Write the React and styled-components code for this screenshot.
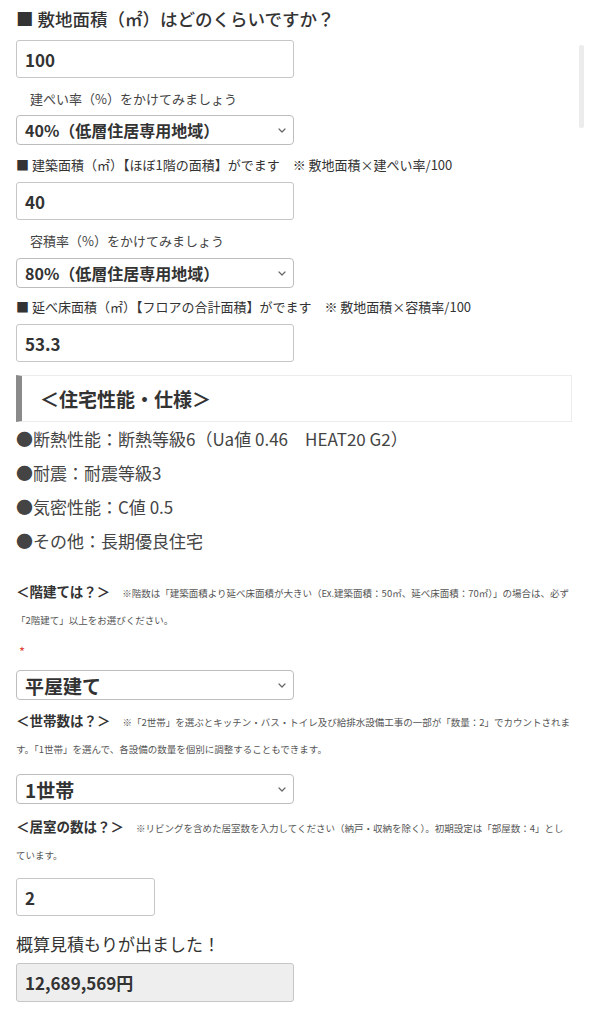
import React from 'react';
import styled, { createGlobalStyle } from 'styled-components';

const GlobalStyle = createGlobalStyle`
  body {
    margin: 0;
    background: #fff;
    font-family: "Noto Sans CJK JP", "Noto Sans", sans-serif;
    color: #333;
  }
`;

const Page = styled.div`
  position: relative;
  width: 556px;
  padding: 4px 17px 20px 16px;
`;

const ScrollThumb = styled.div`
  position: absolute;
  top: 45px;
  left: 579px;
  width: 5px;
  height: 83px;
  border-radius: 2px;
  background: #ececec;
`;

const Title = styled.h2`
  margin: 0;
  font-size: 17.5px;
  font-weight: 500;
  line-height: 30px;
  color: #333;
`;

const Field = styled.div`
  box-sizing: border-box;
  width: ${(p) => p.$w || 278}px;
  height: ${(p) => p.$h || 38}px;
  margin-top: ${(p) => p.$mt || 0}px;
  padding: 0 8px;
  display: flex;
  align-items: center;
  border: 1px solid #c6c6c6;
  border-radius: 3px;
  background: ${(p) => (p.$readonly ? '#eeeeee' : '#fff')};
  font-size: 17px;
  font-weight: 700;
  color: #333;
`;

const SelectBox = styled.div`
  box-sizing: border-box;
  width: 278px;
  height: 30px;
  margin-top: ${(p) => p.$mt || 0}px;
  padding: 0 7px 0 8px;
  display: flex;
  align-items: center;
  justify-content: space-between;
  border: 1px solid #bdbdbd;
  border-radius: 4px;
  background: #fff;
  font-size: ${(p) => p.$fs || 16}px;
  font-weight: 700;
  color: #333;
`;

const Hint = styled.p`
  margin: ${(p) => p.$mt || 0}px 0 0;
  padding-left: 14px;
  font-size: 13px;
  line-height: 20px;
  color: #444;
`;

const Note = styled.p`
  margin: ${(p) => p.$mt || 0}px 0 0;
  font-size: 13px;
  line-height: 20px;
  color: #333;
`;

const SectionHead = styled.h3`
  box-sizing: border-box;
  margin: 13px 0 0;
  height: 47px;
  display: flex;
  align-items: center;
  padding-left: 18px;
  border: 1px solid #ececec;
  border-left: 6px solid #8a8a8a;
  font-size: 19px;
  font-weight: 700;
  color: #333;
`;

const SpecList = styled.ul`
  list-style: none;
  margin: 0;
  padding: 0;
`;

const SpecItem = styled.li`
  font-size: 17px;
  line-height: 34px;
  color: #444;
  white-space: pre;
`;

const Question = styled.div`
  margin-top: ${(p) => p.$mt || 0}px;
  font-size: 9.5px;
  line-height: 27px;
  color: #555;
`;

const QTitle = styled.span`
  font-size: 13.5px;
  line-height: 14px;
  font-weight: 700;
  color: #333;
`;

const QNote = styled.span`
  margin-left: 12px;
  line-height: 10px;
`;

const Required = styled.div`
  margin-top: 8px;
  padding-left: 3px;
  font-size: 13px;
  line-height: 20px;
  color: #e0453a;
`;

const Result = styled.p`
  margin: 15px 0 0;
  font-size: 17px;
  line-height: 26px;
  color: #333;
`;

const Chevron = () => (
  <svg width="8" height="5" viewBox="0 0 8 5" fill="none">
    <path d="M1 1l3 3 3-3" stroke="#666" strokeWidth="1.2" strokeLinecap="round" strokeLinejoin="round" />
  </svg>
);

const Select = ({ children, mt, fs }) => (
  <SelectBox $mt={mt} $fs={fs}>
    <span>{children}</span>
    <Chevron />
  </SelectBox>
);

export default function App() {
  return (
    <Page>
      <GlobalStyle />
      <ScrollThumb />
      <Title>■ 敷地面積（㎡）はどのくらいですか？</Title>
      <Field $mt={6}>100</Field>
      <Hint $mt={11}>建ぺい率（%）をかけてみましょう</Hint>
      <Select mt={6}>40%（低層住居専用地域）</Select>
      <Note $mt={10}>■ 建築面積（㎡）【ほぼ1階の面積】がでます　※ 敷地面積×建ぺい率/100</Note>
      <Field $mt={7}>40</Field>
      <Hint $mt={11}>容積率（%）をかけてみましょう</Hint>
      <Select mt={7}>80%（低層住居専用地域）</Select>
      <Note $mt={9}>■ 延べ床面積（㎡）【フロアの合計面積】がでます　※ 敷地面積×容積率/100</Note>
      <Field $mt={7}>53.3</Field>

      <SectionHead>＜住宅性能・仕様＞</SectionHead>
      <SpecList>
        <SpecItem>●断熱性能：断熱等級6（Ua値 0.46　HEAT20 G2）</SpecItem>
        <SpecItem>●耐震：耐震等級3</SpecItem>
        <SpecItem>●気密性能：C値 0.5</SpecItem>
        <SpecItem>●その他：長期優良住宅</SpecItem>
      </SpecList>

      <Question $mt={22}>
        <QTitle>＜階建ては？＞</QTitle>
        <QNote>※階数は「建築面積より延べ床面積が大きい（Ex.建築面積：50㎡、延べ床面積：70㎡）」の場合は、必ず「2階建て」以上をお選びください。</QNote>
      </Question>
      <Required>*</Required>
      <Select mt={8} fs={19}>平屋建て</Select>

      <Question $mt={9}>
        <QTitle>＜世帯数は？＞</QTitle>
        <QNote>※「2世帯」を選ぶとキッチン・バス・トイレ及び給排水設備工事の一部が「数量：2」でカウントされます。「1世帯」を選んで、各設備の数量を個別に調整することもできます。</QNote>
      </Question>
      <Select mt={11} fs={19}>1世帯</Select>

      <Question $mt={11}>
        <QTitle>＜居室の数は？＞</QTitle>
        <QNote>※リビングを含めた居室数を入力してください（納戸・収納を除く）。初期設定は「部屋数：4」としています。</QNote>
      </Question>
      <Field $mt={9} $w={139}>2</Field>

      <Result>概算見積もりが出ました！</Result>
      <Field $mt={6} $h={39} $readonly>12,689,569円</Field>
    </Page>
  );
}
